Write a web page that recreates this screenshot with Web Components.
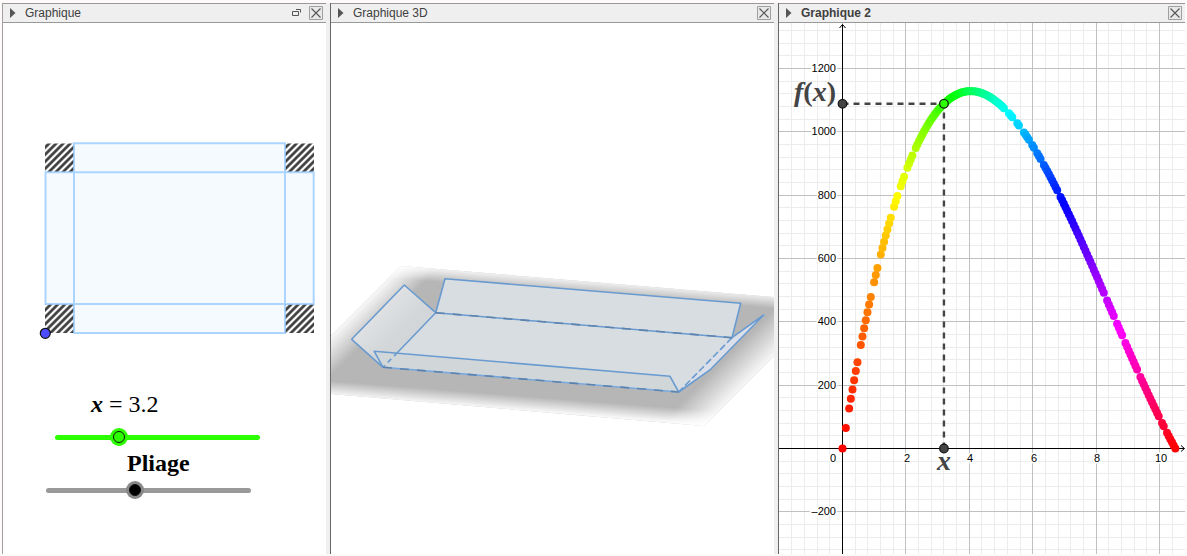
<!DOCTYPE html>
<html lang="fr">
<head>
<meta charset="utf-8">
<title>Boîte pliée et volume</title>
<style>
html, body { margin: 0; height: 100%; }
body { background: #fffafa; font-family: "Liberation Sans", Arial, sans-serif; }
</style>
</head>
<body>
<geo-workspace>
  <geo-panel detachable>
    <span slot="title">Graphique</span>
    <sheet-view></sheet-view>
    <math-slider style="--inset: 49px; --label-inset: 88px; --track: #2bff00; --knob: #2bff00; --ring: #2bff00; --gap: 7px" min="0" max="10.5" step="0.1" value="3.2"><b><i>x</i></b> = 3.2</math-slider>
    <math-slider style="--inset: 40px; --label-inset: 124px; --track: #999; --knob: #000; --ring: #888; --gap: 1px" min="0" max="100" step="1" value="43"><b>Pliage</b></math-slider>
  </geo-panel>
  <geo-panel divided>
    <span slot="title">Graphique 3D</span>
    <box-view></box-view>
  </geo-panel>
  <geo-panel divided active>
    <span slot="title">Graphique 2</span>
    <plot-view></plot-view>
  </geo-panel>
</geo-workspace>

<script>
class Base extends HTMLElement {
  constructor() {
    super();
    this.attachShadow({ mode: "open" }).innerHTML = this.constructor.html;
  }
}

class GeoWorkspace extends Base {
  static html = `
    <style>
      :host { display: grid; grid-template-columns: 324fr 444fr 407fr; gap: 4px; box-sizing: border-box;
        min-height: 100vh; padding: 3px 2px 2px; background: linear-gradient(#efefef, #efefef) content-box, #fffafa; }
    </style><slot></slot>`;
}
customElements.define("geo-workspace", GeoWorkspace);

class GeoPanel extends Base {
  static html = `
    <style>
      :host { display: flex; flex-direction: column; min-width: 0; background: #fff; border-left: 1px solid #a0a0a0; }
      :host([divided]) { border-left-color: #666; }
      header { display: flex; align-items: center; height: 18px; padding: 0 3px 0 7px; background: #efefef;
        border-top: 1px solid #999; border-bottom: 1px solid #999; color: #404040; font-size: 12px; line-height: 18px; }
      :host([active]) header { font-weight: 700; }
      button { display: block; flex: none; padding: 0; border: 0; background: none; font-size: 0; }
      svg { display: block; }
      .title { flex: 1; margin-left: 9px; }
      .detach { display: none; margin-right: 8px; }
      :host([detachable]) .detach { display: block; }
      main { flex: 1; display: flex; flex-direction: column; min-height: 0; }
    </style>
    <header>
      <button aria-label="Barre de style"><svg width="6" height="10"><path d="M0 0L5.5 5L0 10Z" fill="#555"/></svg></button>
      <span class="title"><slot name="title"></slot></span>
      <button class="detach" aria-label="Détacher"><svg width="9" height="8" fill="none" stroke="#555"><path d="M.5 2.5H6.5V6.5H.5ZM4 .5H8.5V3.5" stroke-width="1"/></svg></button>
      <button aria-label="Fermer"><svg width="14" height="14" fill="none"><path d="M.5 .5H13.5V13.5H.5Z" fill="#e8e8e8" stroke="#a0a0a0"/><path d="M2.5 2.5L11.5 11.5M11.5 2.5L2.5 11.5" stroke="#555" stroke-width="1.1"/></svg></button>
    </header>
    <main><slot></slot></main>`;
}
customElements.define("geo-panel", GeoPanel);

class MathSlider extends Base {
  static html = `
    <style>
      :host { display: block; color: #000; font-family: "Liberation Serif", serif; }
      label { display: block; width: max-content; margin: 0 0 var(--gap) var(--label-inset); font-size: 24px; line-height: 32px; }
      div { display: grid; align-items: center; width: 212px; height: 20px; margin-left: var(--inset); }
      div::before { content: ""; grid-area: 1 / 1; height: 5px; margin: 0 4px 0 3px; border-radius: 3px; background: var(--track); }
      input { grid-area: 1 / 1; appearance: none; width: 100%; height: 12px; margin: 0; background: none; }
      input::-webkit-slider-thumb { appearance: none; box-sizing: border-box; width: 12px; height: 12px; border: 1px solid #111;
        border-radius: 50%; background: var(--knob); box-shadow: 0 0 0 3px var(--ring); }
    </style>
    <label for="range"><slot></slot></label>
    <div><input id="range" type="range"></div>`;
  connectedCallback() {
    const input = this.shadowRoot.querySelector("input");
    for (const name of ["min", "max", "step"]) input.setAttribute(name, this.getAttribute(name));
    input.value = this.getAttribute("value");
  }
}
customElements.define("math-slider", MathSlider);

class SheetView extends Base {
  static html = `
    <style>:host { display: block; } svg { display: block; width: 100%; height: auto; }</style>
    <svg viewBox="3 23 323 365" role="img" aria-label="Patron de la boîte">
      <defs><pattern id="hatch" width="5" height="5" patternUnits="userSpaceOnUse" patternTransform="translate(45 144) rotate(45)">
        <path d="M2.5 0V5" stroke="#333" stroke-width="2.6"/></pattern></defs>
      <g fill="url(#hatch)">
        <path d="M45 143.500H74V172H45ZM285 143.500H314V172H285ZM45 304H74V333H45ZM285 304H314V333H285Z"/>
      </g>
      <path d="M74 143H285V172H314V304H285V333H74V304H45V172H74Z" fill="#f5faff"/>
      <g fill="none" stroke="#99ccff" stroke-width="2" stroke-opacity=".8">
        <path d="M74 143.300H285V333H74ZM45.500 172.200H313.700V304H45.500Z"/>
      </g>
      <circle cx="45.300" cy="333.300" r="5" fill="#4d4dff" stroke="#111" stroke-width="1.200"/>
    </svg>`;
}
customElements.define("sheet-view", SheetView);

class BoxView extends Base {
  static html = `
    <style>:host { display: block; flex: 1; min-height: 0; } svg { display: block; width: 100%; height: 100%; }</style>
    <svg viewBox="331 23 443 531" role="img" aria-label="Boîte en trois dimensions">
      <defs>
        <linearGradient id="t" gradientUnits="userSpaceOnUse" x1="401" y1="265" x2="399.900" y2="279"><stop stop-color="#fff" stop-opacity=".9"/><stop offset="1" stop-color="#fff" stop-opacity="0"/></linearGradient>
        <linearGradient id="b" gradientUnits="userSpaceOnUse" x1="331" y1="395" x2="332.100" y2="381"><stop stop-color="#fff" stop-opacity=".9"/><stop offset="1" stop-color="#fff" stop-opacity="0"/></linearGradient>
        <linearGradient id="l" gradientUnits="userSpaceOnUse" x1="366" y1="301" x2="386" y2="321"><stop stop-color="#fff" stop-opacity=".9"/><stop offset="1" stop-color="#fff" stop-opacity="0"/></linearGradient>
        <linearGradient id="r" gradientUnits="userSpaceOnUse" x1="739" y1="391" x2="716" y2="368"><stop stop-color="#fff" stop-opacity=".9"/><stop offset="1" stop-color="#fff" stop-opacity="0"/></linearGradient>
        <linearGradient id="flap" gradientUnits="userSpaceOnUse" x1="378" y1="312" x2="400" y2="334"><stop stop-color="#dfe1e3"/><stop offset="1" stop-color="#d2d6d9"/></linearGradient>
        <path id="ground" d="M401 266L774 297V356L704 426L331 394V336Z"/>
      </defs>
      <use href="#ground" fill="#b6b6b6"/>
      <use href="#ground" fill="url(#t)"/><use href="#ground" fill="url(#b)"/>
      <use href="#ground" fill="url(#l)"/><use href="#ground" fill="url(#r)"/>
      <path d="M435.700 312.700L445 278.700L740.700 303.300L732 337.700L678.700 392L383 367.300Z" fill="#d8dde2"/>
      <path d="M404.300 285L435.700 312.700L383 367.300L351.700 339.300Z" fill="url(#flap)"/>
      <path d="M374.300 351.300L670 376.300L678.700 392L383 367.300Z" fill="#d1d7d9"/>
      <path d="M732 337.700L763.700 315L710.700 369.300L678.700 392Z" fill="#dadfe9"/>
      <g fill="none" stroke="#699bd0" stroke-width="1.600" stroke-linejoin="round">
        <path d="M435.700 312.700L445 278.700L740.700 303.300L732 337.700Z"/>
        <path d="M397.500 352.500L435.700 312.700L404.300 285L351.700 339.300L383 367.300"/>
        <path d="M383 367.300L374.300 351.300L670 376.300L678.700 392"/>
        <path d="M732 337.700L763.700 315L710.700 369.300L678.700 392"/>
        <path d="M397.500 352.500L383 367.300" stroke-dasharray="5 4"/>
        <path d="M732 337.700L678.700 392" stroke-dasharray="7 3"/>
        <path d="M383 367.300L678.700 392" stroke="#78a9de"/>
        <path d="M383 367.300L678.700 392M435.700 312.700L732 337.700" stroke="#5d83ad" stroke-dasharray="9 8"/>
      </g>
    </svg>`;
}
customElements.define("box-view", BoxView);

class PlotView extends Base {
  static html = `
    <style>
      :host { display: block; flex: 1; min-height: 0; }
      svg { display: block; width: 100%; height: 100%; }
      .tick { font: 11px "Liberation Sans", sans-serif; fill: #000; stroke: #fff; stroke-width: 3px; paint-order: stroke; }
      .math { font: 700 28px "Liberation Serif", serif; fill: #444; }
      .math.it, .it { font-style: italic; }
    </style>
    <svg viewBox="779 23 406 531" role="img" aria-label="Volume en fonction de x"></svg>`;
  connectedCallback() {
    const OX = 842.5, OY = 448.5, UX = 31.7, UY = 380 / 1200;
    const volume = x => x * (21 - 2 * x) * (29.7 - 2 * x);
    const snap = v => Math.floor(v) + 0.5;
    let minor = "", major = "", ticks = "", dots = "";
    for (let i = -4; i <= 26; i++) {
      const line = `M${snap(OX + i * UX * 0.4)} 23V554`;
      if (i % 5) minor += line; else major += line;
    }
    for (let i = -8; i <= 33; i++) {
      const line = `M779 ${snap(OY - i * UY * 40)}H1185`;
      if (i % 5) minor += line; else major += line;
    }
    for (let x = 2; x <= 10; x += 2)
      ticks += `<text class="tick" text-anchor="middle" x="${Math.round(OX + x * UX) + 1}" y="462">${x}</text>`;
    ticks += `<text class="tick" text-anchor="end" x="836" y="462">0</text>`;
    for (let y = -200; y <= 1200; y += 200)
      if (y) ticks += `<text class="tick" text-anchor="end" x="836" y="${Math.round(OY - y * UY + 3.4)}">${y < 0 ? "–" + -y : y}</text>`;
    const runs = [[0,0],[2,2],[4,9],[11,17],[19,21],[23,29],[31,33],[35,37],[39,42],[44,47],[48,97],[100,102],[105,106],
      [109,112],[114,115],[117,119],[121,129],[131,157],[159,163],[165,168],[170,177],[179,190],[192,193],[195,200]];
    for (const [a, b] of runs)
      for (let k = a; k <= b; k++) {
        const x = k * 10.5 / 200;
        dots += `<circle cx="${OX + x * UX}" cy="${OY - volume(x) * UY}" r="4" fill="hsl(${x / 10.5 * 360} 100% 50%)"/>`;
      }
    const px = OX + 3.2 * UX, py = OY - volume(3.2) * UY;
    this.shadowRoot.querySelector("svg").innerHTML = `
      <path d="${minor}" stroke="#ececec" fill="none"/>
      <path d="${major}" stroke="#c0c0c0" fill="none"/>
      <path d="M${OX} 554V24.500M779 ${OY}H1184M839.500 28L842.500 24.500L845.500 28M1181 445.500L1184.500 448.500L1181 451.500" stroke="#000" fill="none"/>
      ${ticks}
      <path d="M${OX} ${py}H${px}M${px} ${OY}V${py}" stroke="#444" stroke-width="2.400" stroke-dasharray="6 5" fill="none"/>
      ${dots}
      <g stroke="#111" stroke-width="1.200">
        <circle cx="${OX}" cy="${py}" r="4.300" fill="#444"/><circle cx="${px}" cy="${OY}" r="4.300" fill="#444"/>
        <circle cx="${px}" cy="${py}" r="4.300" fill="#2bff00"/>
      </g>
      <text class="math" text-anchor="end" x="836" y="101"><tspan class="it">f</tspan>(<tspan class="it">x</tspan>)</text>
      <text class="math it" text-anchor="middle" x="944" y="470">x</text>`;
  }
}
customElements.define("plot-view", PlotView);
</script>
</body>
</html>
